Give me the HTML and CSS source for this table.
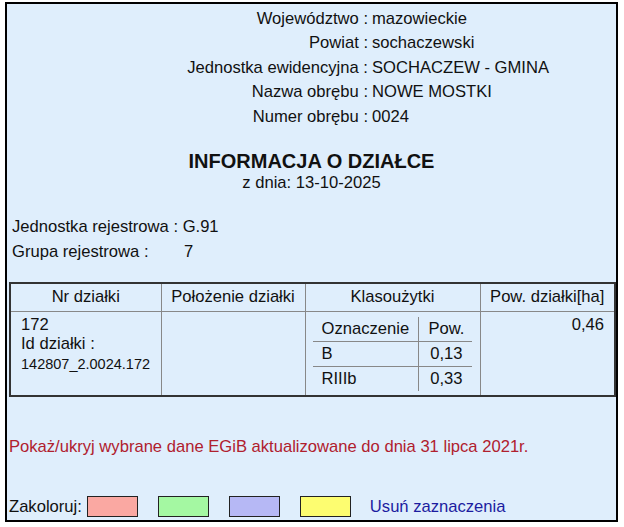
FILE: index.html
```html
<!DOCTYPE html>
<html lang="pl">
<head>
<meta charset="utf-8">
<title>Informacja o działce</title>
<link rel="stylesheet" href="styles.css">
</head>
<body>
<div class="box">
  <div class="info">
    <div class="lbl">Województwo :</div><div class="val">mazowieckie</div>
    <div class="lbl">Powiat :</div><div class="val">sochaczewski</div>
    <div class="lbl">Jednostka ewidencyjna :</div><div class="val">SOCHACZEW - GMINA</div>
    <div class="lbl">Nazwa obrębu :</div><div class="val">NOWE MOSTKI</div>
    <div class="lbl">Numer obrębu :</div><div class="val">0024</div>
  </div>
  <div class="title">INFORMACJA O DZIAŁCE</div>
  <div class="date">z dnia: 13-10-2025</div>
  <div class="reg">
    <div>Jednostka rejestrowa : G.91</div>
    <div class="grp"><span class="grp-l">Grupa rejestrowa :</span><span>7</span></div>
  </div>
  <table class="parcel">
    <colgroup>
      <col class="c1"><col class="c2"><col class="c3"><col class="c4">
    </colgroup>
    <tr class="head">
      <th>Nr działki</th>
      <th>Położenie działki</th>
      <th>Klasoużytki</th>
      <th>Pow. działki[ha]</th>
    </tr>
    <tr class="body">
      <td class="nr">172<br>Id działki :<br><span class="id">142807_2.0024.172</span></td>
      <td></td>
      <td>
        <table class="klas">
          <tr><td class="k1">Oznaczenie</td><td class="k2 hp">Pow.</td></tr>
          <tr><td class="k1">B</td><td class="k2">0,13</td></tr>
          <tr><td class="k1">RIIIb</td><td class="k2">0,33</td></tr>
        </table>
      </td>
      <td class="area">0,46</td>
    </tr>
  </table>
  <div class="toggle">Pokaż/ukryj wybrane dane EGiB aktualizowane do dnia 31 lipca 2021r.</div>
  <div class="colors">
    <span class="zak">Zakoloruj:</span>
    <span class="sw pink"></span>
    <span class="sw green"></span>
    <span class="sw blue"></span>
    <span class="sw yellow"></span>
    <span class="clear">Usuń zaznaczenia</span>
  </div>
</div>
</body>
</html>
```
FILE: styles.css
```css
html, body {
  margin: 0;
  padding: 0;
  background: #ffffff;
}
body {
  font-family: "Liberation Sans", Arial, sans-serif;
  font-size: 16.6px;
  color: #111;
}
.box {
  margin: 2px 0 0 5px;
  width: 609px;
  height: 516px;
  border: 2px solid #000;
  background: #dfeefc;
  position: relative;
}
.info {
  display: grid;
  grid-template-columns: 361px auto;
  column-gap: 4px;
  padding-top: 2.5px;
  line-height: 24.5px;
}
.lbl { text-align: right; }
.title {
  margin-top: 20.5px;
  text-align: center;
  font-weight: bold;
  font-size: 20px;
  line-height: 22px;
}
.date {
  text-align: center;
  line-height: 22px;
}
.reg {
  margin-top: 20px;
  padding-left: 5px;
  line-height: 25px;
}
.grp-l { display: inline-block; width: 172px; }
.parcel {
  margin: 18px 0 0 2px;
  width: 605px;
  table-layout: fixed;
  border-collapse: collapse;
  border: 2px solid #333;
}
.parcel col.c1 { width: 151px; }
.parcel col.c2 { width: 144px; }
.parcel col.c3 { width: 175px; }
.parcel col.c4 { width: 135px; }
.parcel th, .parcel .body > td {
  border: 1px solid #888;
  padding: 0;
  vertical-align: top;
}
.parcel th {
  font-weight: normal;
  height: 27px;
  vertical-align: middle;
  white-space: nowrap;
}
.nr { padding: 3px 0 0 10px !important; line-height: 19px; }
.id { font-size: 14.5px; line-height: 22px; }
.area { text-align: right; padding: 3px 10px 0 0 !important; }
.klas {
  border-collapse: collapse;
  margin: 5px 0 4px 7px;
  table-layout: fixed;
  width: 159px;
}
.klas td {
  border: 1px solid #888;
  height: 24px;
  padding: 0;
}
.klas tr:first-child td { border-top: none; }
.klas tr:last-child td { border-bottom: none; }
.klas td.k1 { border-left: none; width: 96px; padding-left: 9px; }
.klas td.k2 { border-right: none; text-align: right; padding-right: 9px; }
.klas td.hp { text-align: left; padding-left: 10px; }
.toggle {
  margin-top: 40px;
  padding-left: 2px;
  color: #b0202e;
}
.colors {
  position: absolute;
  left: 2px;
  bottom: 3px;
  display: flex;
  align-items: center;
}
.zak { margin-right: 5px; }
.sw {
  display: inline-block;
  width: 49px;
  height: 19px;
  border: 1px solid #222;
  margin-right: 20px;
}
.sw.yellow { margin-right: 19px; }
.pink { background: #faa8a2; }
.green { background: #a4f8a2; }
.blue { background: #b6b8f5; }
.yellow { background: #fdfd70; }
.clear { color: #1c1ca0; }
```
